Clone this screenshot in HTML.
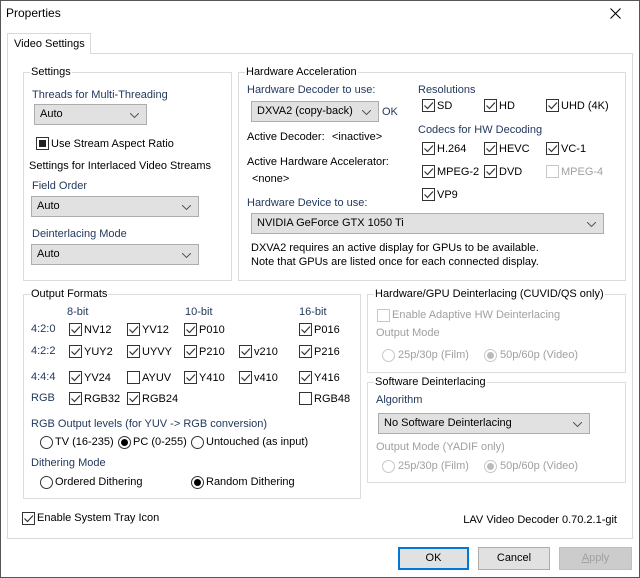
<!DOCTYPE html>
<html><head><meta charset="utf-8"><style>
*{margin:0;padding:0;box-sizing:border-box}
body{width:640px;height:578px;background:#fff;font-family:"Liberation Sans",sans-serif;font-size:11px;color:#000;position:relative;overflow:hidden}
.a{position:absolute;white-space:nowrap;line-height:16px}
.n{color:#23395d}
.d{color:#a0a0a0}
.win{position:absolute;left:0;top:0;width:640px;height:578px;border:1px solid #555}
.grp{position:absolute;border:1px solid #dcdcdc}
.gl{position:absolute;top:-9px;left:6px;background:#fff;padding:0 1px;line-height:16px;white-space:nowrap}
.cb{position:absolute;width:13px;height:13px;border:1px solid #333;background:#fff}
.cb svg{position:absolute;left:0;top:0}
.cb.dis{border-color:#c8c8c8}
.rb{position:absolute;width:13px;height:13px;border:1px solid #333;border-radius:50%;background:#fff}
.rb.on::after{content:"";position:absolute;left:2px;top:2px;width:7px;height:7px;border-radius:50%;background:#000}
.rb.dis{border-color:#c8c8c8}
.rb.dis.on::after{background:#bbb}
.cmb{position:absolute;height:21px;background:#e1e1e1;border:1px solid #adadad;padding-left:5px;line-height:19px;white-space:nowrap}
.cmb svg{position:absolute;right:7px;top:8px}
.btn{position:absolute;height:23px;background:#e1e1e1;border:1px solid #adadad;text-align:center;line-height:21px}
</style></head><body>
<div class="win"></div>
<div class="a" style="left:6px;top:5px;font-size:12px">Properties</div>
<svg style="position:absolute;left:610px;top:8px" width="11" height="11"><path d="M0.5 0.5L10.5 10.5M10.5 0.5L0.5 10.5" stroke="#000" stroke-width="1.1"/></svg>
<!-- panel -->
<div style="position:absolute;left:7px;top:53px;width:626px;height:486px;border:1px solid #d9d9d9"></div>
<div style="position:absolute;left:7px;top:33px;width:84px;height:21px;border:1px solid #d9d9d9;border-bottom:none;background:#fff"></div>
<div class="a" style="left:14px;top:36px">Video Settings</div>

<!-- Settings -->
<div class="grp" style="left:23px;top:72px;width:209px;height:209px"><div class="gl">Settings</div></div>
<div class="a n" style="left:32px;top:87px">Threads for Multi-Threading</div>
<div class="cmb" style="left:34px;top:104px;width:113px">Auto<svg width="9" height="5"><path d="M0 0L4.5 4.5L9 0" fill="none" stroke="#555"/></svg></div>
<div class="cb" style="left:36px;top:137px"><div style="position:absolute;left:2px;top:2px;width:7px;height:7px;background:#222"></div></div>
<div class="a" style="left:51px;top:136px">Use Stream Aspect Ratio</div>
<div class="a" style="left:29px;top:158px">Settings for Interlaced Video Streams</div>
<div class="a n" style="left:32px;top:178px">Field Order</div>
<div class="cmb" style="left:31px;top:196px;width:168px">Auto<svg width="9" height="5"><path d="M0 0L4.5 4.5L9 0" fill="none" stroke="#555"/></svg></div>
<div class="a n" style="left:32px;top:226px">Deinterlacing Mode</div>
<div class="cmb" style="left:31px;top:244px;width:168px">Auto<svg width="9" height="5"><path d="M0 0L4.5 4.5L9 0" fill="none" stroke="#555"/></svg></div>

<!-- HW Accel -->
<div class="grp" style="left:238px;top:72px;width:388px;height:209px"><div class="gl">Hardware Acceleration</div></div>
<div class="a n" style="left:247px;top:82px">Hardware Decoder to use:</div>
<div class="cmb" style="left:251px;top:101px;width:128px">DXVA2 (copy-back)<svg width="9" height="5"><path d="M0 0L4.5 4.5L9 0" fill="none" stroke="#555"/></svg></div>
<div class="a n" style="left:382px;top:104px">OK</div>
<div class="a" style="left:247px;top:129px">Active Decoder:</div>
<div class="a" style="left:332px;top:129px">&lt;inactive&gt;</div>
<div class="a" style="left:247px;top:154px">Active Hardware Accelerator:</div>
<div class="a" style="left:252px;top:171px">&lt;none&gt;</div>
<div class="a n" style="left:247px;top:195px">Hardware Device to use:</div>
<div class="cmb" style="left:251px;top:213px;width:353px">NVIDIA GeForce GTX 1050 Ti<svg width="9" height="5"><path d="M0 0L4.5 4.5L9 0" fill="none" stroke="#555"/></svg></div>
<div class="a" style="left:251px;top:240px">DXVA2 requires an active display for GPUs to be available.</div>
<div class="a" style="left:251px;top:254px">Note that GPUs are listed once for each connected display.</div>
<div class="a n" style="left:418px;top:82px">Resolutions</div>
<div class="a n" style="left:418px;top:122px">Codecs for HW Decoding</div>

<!-- Output formats -->
<div class="grp" style="left:23px;top:294px;width:338px;height:205px"><div class="gl">Output Formats</div></div>
<div class="a n" style="left:67px;top:304px">8-bit</div>
<div class="a n" style="left:185px;top:304px">10-bit</div>
<div class="a n" style="left:299px;top:304px">16-bit</div>
<div class="a n" style="left:31px;top:321px">4:2:0</div>
<div class="a n" style="left:31px;top:343px">4:2:2</div>
<div class="a n" style="left:31px;top:369px">4:4:4</div>
<div class="a n" style="left:31px;top:390px">RGB</div>
<div class="a n" style="left:31px;top:416px">RGB Output levels (for YUV -&gt; RGB conversion)</div>
<div class="rb" style="left:40px;top:436px"></div><div class="a" style="left:55px;top:434px">TV (16-235)</div>
<div class="rb on" style="left:118px;top:436px"></div><div class="a" style="left:133px;top:434px">PC (0-255)</div>
<div class="rb" style="left:191px;top:436px"></div><div class="a" style="left:206px;top:434px">Untouched (as input)</div>
<div class="a n" style="left:31px;top:455px">Dithering Mode</div>
<div class="rb" style="left:40px;top:476px"></div><div class="a" style="left:55px;top:474px">Ordered Dithering</div>
<div class="rb on" style="left:191px;top:476px"></div><div class="a" style="left:206px;top:474px">Random Dithering</div>

<!-- HW GPU deint -->
<div class="grp" style="left:367px;top:294px;width:259px;height:79px"><div class="gl">Hardware/GPU Deinterlacing (CUVID/QS only)</div></div>
<div class="cb dis" style="left:377px;top:309px"></div><div class="a d" style="left:392px;top:307px">Enable Adaptive HW Deinterlacing</div>
<div class="a d" style="left:376px;top:325px">Output Mode</div>
<div class="rb dis" style="left:382px;top:349px"></div><div class="a d" style="left:398px;top:347px">25p/30p (Film)</div>
<div class="rb dis on" style="left:484px;top:349px"></div><div class="a d" style="left:500px;top:347px">50p/60p (Video)</div>

<!-- SW deint -->
<div class="grp" style="left:367px;top:382px;width:259px;height:101px"><div class="gl">Software Deinterlacing</div></div>
<div class="a n" style="left:376px;top:392px">Algorithm</div>
<div class="cmb" style="left:378px;top:413px;width:212px">No Software Deinterlacing<svg width="9" height="5"><path d="M0 0L4.5 4.5L9 0" fill="none" stroke="#555"/></svg></div>
<div class="a d" style="left:376px;top:439px">Output Mode (YADIF only)</div>
<div class="rb dis" style="left:382px;top:460px"></div><div class="a d" style="left:398px;top:458px">25p/30p (Film)</div>
<div class="rb dis on" style="left:484px;top:460px"></div><div class="a d" style="left:500px;top:458px">50p/60p (Video)</div>

<div class="a" style="left:37px;top:510px">Enable System Tray Icon</div>
<div class="a" style="right:23px;top:512px">LAV Video Decoder 0.70.2.1-git</div>

<div class="btn" style="left:398px;top:547px;width:71px;border:2px solid #0078d7;line-height:19px">OK</div>
<div class="btn" style="left:478px;top:547px;width:72px">Cancel</div>
<div class="btn" style="left:559px;top:547px;width:73px;color:#a0a0a0;background:#ccc;border-color:#bfbfbf"><u>A</u>pply</div>

<div id="cbs"></div>
<script>
var ck='<svg width="11" height="11"><path d="M1.5 5.5L4.5 8.5L10 2.5" fill="none" stroke="#333" stroke-width="1.2"/></svg>';
var items=[
[22,512,1,0],
[422,99,1,"SD"],[484,99,1,"HD"],[546,99,1,"UHD (4K)"],
[422,142,1,"H.264"],[484,142,1,"HEVC"],[546,142,1,"VC-1"],
[422,165,1,"MPEG-2"],[484,165,1,"DVD"],[546,165,2,"MPEG-4"],
[422,188,1,"VP9"],
[69,323,1,"NV12"],[127,323,1,"YV12"],[184,323,1,"P010"],[299,323,1,"P016"],
[69,345,1,"YUY2"],[127,345,1,"UYVY"],[184,345,1,"P210"],[239,345,1,"v210"],[299,345,1,"P216"],
[69,371,1,"YV24"],[127,371,0,"AYUV"],[184,371,1,"Y410"],[239,371,1,"v410"],[299,371,1,"Y416"],
[69,392,1,"RGB32"],[127,392,1,"RGB24"],[299,392,0,"RGB48"]];
var h='';
items.forEach(function(i){
 h+='<div class="cb'+(i[2]==2?' dis':'')+'" style="left:'+i[0]+'px;top:'+i[1]+'px">'+(i[2]==1?ck:'')+'</div>';
 if(i[3])h+='<div class="a'+(i[2]==2?' d':'')+'" style="left:'+(i[0]+15)+'px;top:'+(i[1]-1)+'px">'+i[3]+'</div>';
});
document.getElementById('cbs').innerHTML=h;
</script>
</body></html>
